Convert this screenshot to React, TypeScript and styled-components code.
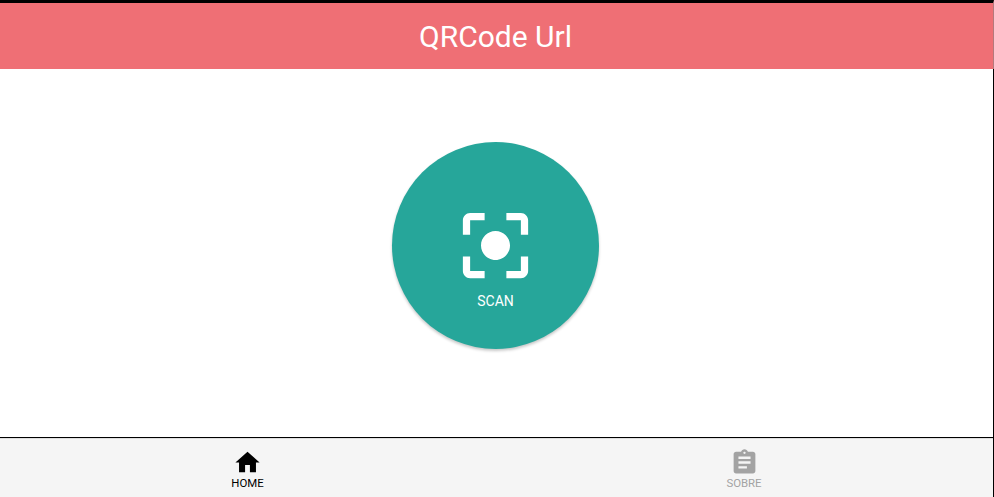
import React from "react";
import styled, { createGlobalStyle } from "styled-components";

const Global = createGlobalStyle`
  html, body { margin: 0; padding: 0; background: #fff; }
  * { box-sizing: border-box; }
`;

const Page = styled.div`
  width: 994px;
  height: 497px;
  display: flex;
  flex-direction: column;
  font-family: Roboto, "Liberation Sans", sans-serif;
  background: #fff;
  overflow: hidden;
`;

const Header = styled.header`
  height: 69px;
  flex: none;
  border-top: 3px solid #000;
  border-right: 1px solid #b5797c;
  padding-right: 2px;
  background: #ef6f75;
  color: #fff;
  display: flex;
  align-items: center;
  justify-content: center;
  font-size: 30px;
  line-height: 35px;
`;

const Main = styled.main`
  flex: 1;
  display: flex;
  align-items: center;
  justify-content: center;
  border-right: 1px solid #000;
  padding: 0 2px 15px 0;
`;

const ScanButton = styled.button`
  width: 207px;
  height: 207px;
  border: 0;
  padding: 60px 0 0;
  border-radius: 50%;
  background: #26a69a;
  color: #fff;
  font-family: inherit;
  display: flex;
  flex-direction: column;
  align-items: center;
  justify-content: flex-start;
  box-shadow: 0 2px 3px rgba(0, 0, 0, 0.22);
`;

const ScanIcon = styled.svg`
  width: 87px;
  height: 87px;
  fill: currentColor;
  display: block;
`;

const ScanLabel = styled.span`
  font-size: 14px;
  line-height: 16px;
  margin-top: 4px;
`;

const TabBar = styled.nav`
  height: 60px;
  flex: none;
  display: grid;
  grid-template-columns: 495px 1fr;
  background: #f5f5f5;
  border-top: 1px solid #000;
  border-right: 1px solid #000;
  box-shadow: inset 0 1px 0 #dedede;
`;

const Tab = styled.div<{ $active?: boolean }>`
  display: flex;
  flex-direction: column;
  align-items: center;
  justify-content: flex-end;
  padding-bottom: 7px;
  color: ${(p) => (p.$active ? "#000" : "#a3a3a3")};
`;

const TabIcon = styled.svg`
  width: 29px;
  height: 29px;
  fill: currentColor;
  display: block;
`;

const TabLabel = styled.span`
  font-size: 11.4px;
  line-height: 13px;
`;

export default function App() {
  return (
    <Page>
      <Global />
      <Header>QRCode Url</Header>
      <Main>
        <ScanButton>
          <ScanIcon viewBox="0 0 24 24">
            <path d="M12 8c-2.21 0-4 1.79-4 4s1.79 4 4 4 4-1.79 4-4-1.79-4-4-4zm-7 7H3v4c0 1.1.9 2 2 2h4v-2H5v-4zM5 5h4V3H5c-1.1 0-2 .9-2 2v4h2V5zm14-2h-4v2h4v4h2V5c0-1.1-.9-2-2-2zm0 16h-4v2h4c1.1 0 2-.9 2-2v-4h-2v4z" />
          </ScanIcon>
          <ScanLabel>SCAN</ScanLabel>
        </ScanButton>
      </Main>
      <TabBar>
        <Tab $active>
          <TabIcon viewBox="0 0 24 24">
            <path d="M10 20v-6h4v6h5v-8h3L12 3 2 12h3v8z" />
          </TabIcon>
          <TabLabel>HOME</TabLabel>
        </Tab>
        <Tab>
          <TabIcon viewBox="0 0 24 24">
            <path d="M19 3h-4.18C14.4 1.84 13.3 1 12 1c-1.3 0-2.4.84-2.82 2H5c-1.1 0-2 .9-2 2v14c0 1.1.9 2 2 2h14c1.1 0 2-.9 2-2V5c0-1.1-.9-2-2-2zm-7 0c.55 0 1 .45 1 1s-.45 1-1 1-1-.45-1-1 .45-1 1-1zm2 14H7v-2h7v2zm3-4H7v-2h10v2zm0-4H7V7h10v2z" />
          </TabIcon>
          <TabLabel>SOBRE</TabLabel>
        </Tab>
      </TabBar>
    </Page>
  );
}
